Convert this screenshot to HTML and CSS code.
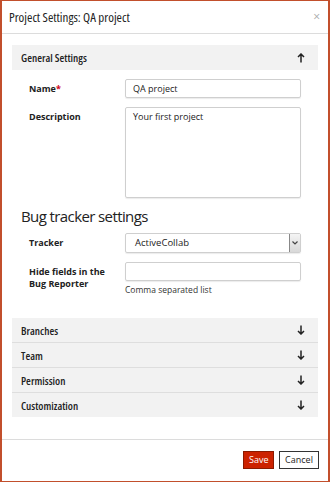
FILE: index.html
```html
<!DOCTYPE html>
<html lang="en">
<head>
  <meta charset="UTF-8" />
  <title>Project Settings</title>
  <link rel="stylesheet" href="styles.css">
</head>
<body>
  <div class="modal">
    <div class="modal-header">
      <h3>Project Settings: QA project</h3>
      <span class="close">&times;</span>
    </div>

    <div class="modal-body">
      <div class="panel-head">
        <span>General Settings</span>
        <svg class="arrow" width="8" height="10" viewBox="0 0 8 10"><path d="M4 9.5V1M1 4l3-3 3 3" fill="none" stroke="#222" stroke-width="1.5"/></svg>
      </div>

      <div class="form">
        <label class="lbl">Name<span class="req">*</span></label>
        <div class="field">QA project</div>

        <label class="lbl">Description</label>
        <div class="field area">Your first project</div>
      </div>

      <h4>Bug tracker settings</h4>

      <div class="form tracker">
        <label class="lbl">Tracker</label>
        <div class="field select">
          <span>ActiveCollab</span>
          <span class="sel-btn"><svg width="6" height="4" viewBox="0 0 6 4"><path d="M0.5 0.5l2.5 2.5 2.5-2.5" fill="none" stroke="#444" stroke-width="1.2"/></svg></span>
        </div>

        <label class="lbl two">Hide fields in the<br>Bug Reporter</label>
        <div>
          <div class="field"></div>
          <div class="help">Comma separated list</div>
        </div>
      </div>

      <div class="panels">
        <div class="panel-head"><span>Branches</span><svg class="arrow" width="8" height="10" viewBox="0 0 8 10"><path d="M4 0.5V9M1 6l3 3 3-3" fill="none" stroke="#222" stroke-width="1.5"/></svg></div>
        <div class="panel-head"><span>Team</span><svg class="arrow" width="8" height="10" viewBox="0 0 8 10"><path d="M4 0.5V9M1 6l3 3 3-3" fill="none" stroke="#222" stroke-width="1.5"/></svg></div>
        <div class="panel-head"><span>Permission</span><svg class="arrow" width="8" height="10" viewBox="0 0 8 10"><path d="M4 0.5V9M1 6l3 3 3-3" fill="none" stroke="#222" stroke-width="1.5"/></svg></div>
        <div class="panel-head"><span>Customization</span><svg class="arrow" width="8" height="10" viewBox="0 0 8 10"><path d="M4 0.5V9M1 6l3 3 3-3" fill="none" stroke="#222" stroke-width="1.5"/></svg></div>
      </div>
    </div>

    <div class="modal-footer">
      <button class="btn save">Save</button>
      <button class="btn cancel">Cancel</button>
    </div>
  </div>
</body>
</html>
```

FILE: styles.css
```css
body {
  margin: 0;
  font-family: 'Open Sans', sans-serif;
  color: #222;
  background: #fff;
}
.modal {
  width: 330px;
  height: 482px;
  box-sizing: border-box;
  border: 1px solid #c24f2c;
  border-left-width: 2px;
  border-right-width: 2px;
  display: flex;
  flex-direction: column;
}
.modal-header {
  height: 32px;
  border-bottom: 1px solid #dcdcdc;
  display: flex;
  align-items: center;
  justify-content: space-between;
  padding: 0 8px 0 7px;
}
.modal-header h3 {
  margin: 0;
  font-size: 13px;
  font-weight: 400;
  font-stretch: 75%;
  color: #222;
}
.close {
  color: #aaa;
  font-size: 12px;
  margin-top: -2px;
}
.modal-body {
  flex: 1;
  padding: 11px 10px 0;
}
.panel-head {
  height: 25px;
  background: #f2f2f2;
  display: flex;
  align-items: center;
  justify-content: space-between;
  padding: 0 13px 0 9px;
  font-size: 11px;
  font-weight: 600;
  font-stretch: 84%;
}
.form {
  display: grid;
  grid-template-columns: 96px 176px;
  row-gap: 9px;
  padding: 9px 0 0 17px;
}
.lbl {
  font-size: 9px;
  font-weight: 700;
  font-stretch: 88%;
  padding-top: 4px;
  line-height: 11.5px;
}
.lbl.two {
  padding-top: 4px;
}
.req {
  color: #d0021b;
}
.field {
  height: 19px;
  box-sizing: border-box;
  border: 1px solid #cfcfcf;
  border-radius: 2px;
  box-shadow: 0 1px 1px rgba(0,0,0,0.08);
  font-size: 9px;
  font-stretch: 90%;
  padding: 3px 7px;
  line-height: 12px;
}
.field.area {
  height: 91px;
}
h4 {
  margin: 7px 0 0 9px;
  font-size: 15px;
  font-weight: 400;
  letter-spacing: -0.6px;
  line-height: 22px;
}
.tracker {
  padding-top: 6px;
}
.field.select {
  height: 20px;
  display: flex;
  justify-content: space-between;
  padding: 0 0 0 9px;
  align-items: center;
  font-size: 9.5px;
}
.sel-btn {
  width: 10px;
  height: 18px;
  background: linear-gradient(#f4f4f4, #d8d8d8);
  border-left: 1px solid #888;
  display: flex;
  align-items: center;
  justify-content: center;
}
.help {
  font-size: 8.5px;
  font-stretch: 92%;
  color: #333;
  margin-top: 3px;
}
.panels {
  margin-top: 23px;
}
.panels .panel-head {
  border-bottom: 1px solid #dedede;
  height: 24px;
}
.panels .panel-head:last-child {
  border-bottom: 0;
}
.modal-footer {
  height: 41px;
  border-top: 1px solid #dcdcdc;
  display: flex;
  justify-content: flex-end;
  align-items: center;
  gap: 5px;
  padding: 0 9px 0 0;
}
.btn {
  height: 18px;
  font-family: 'Open Sans', sans-serif;
  font-size: 9px;
  font-stretch: 90%;
  padding: 0 5px;
  border-radius: 0;
  margin-top: -2px;
}
.save {
  background: #cc2200;
  color: #fff;
  border: 1px solid #8a1a00;
  width: 31px;
}
.cancel {
  background: #fff;
  color: #222;
  border: 1px solid #333;
  width: 40px;
}
```
